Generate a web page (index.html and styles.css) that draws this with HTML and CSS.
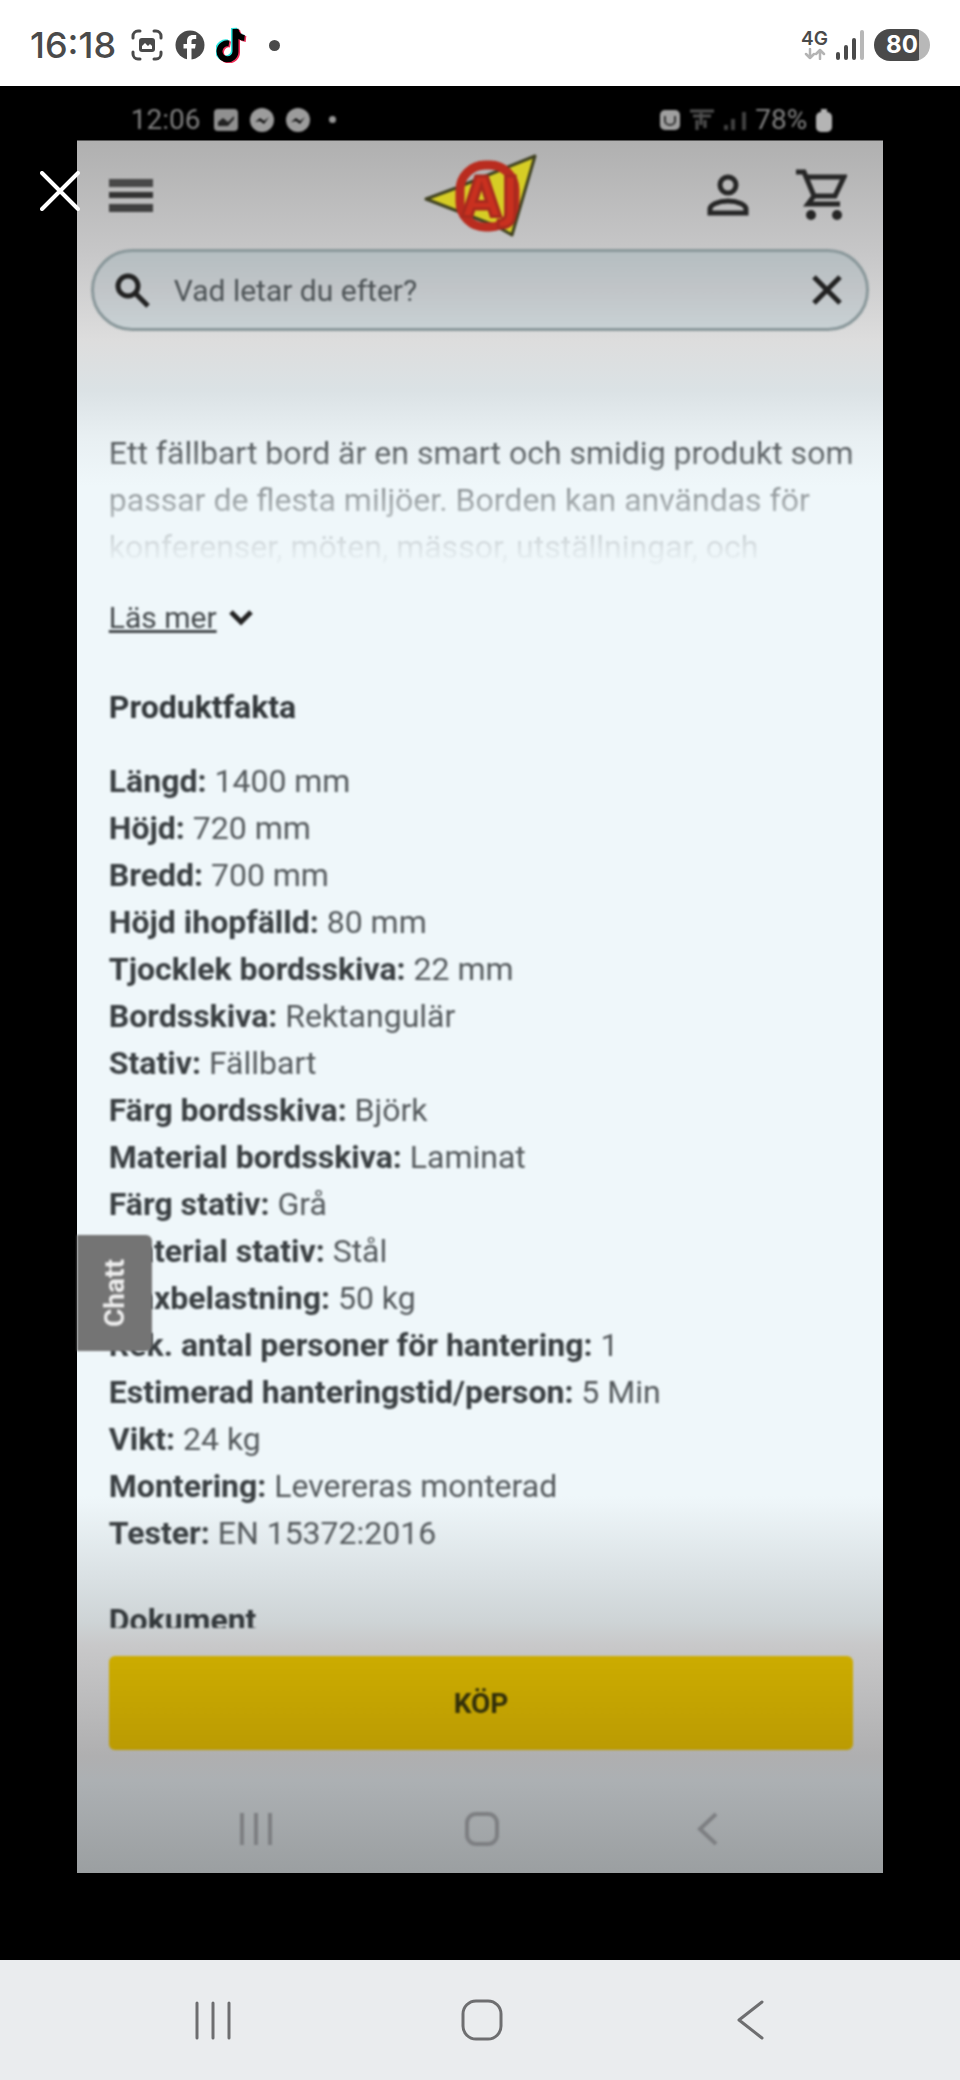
FILE: index.html
```html
<!DOCTYPE html>
<html lang="sv">
<head>
    <meta charset="UTF-8">
    <meta name="viewport" content="width=device-width, initial-scale=1.0">
    <title>Produktfakta</title>
    <link rel="stylesheet" href="styles.css">
</head>
<body>

<header class="status-bar">
    <div class="status-left">
        <span class="clock">16:18</span>
        <svg width="32" height="32" viewBox="0 0 32 32" fill="none" stroke="#4a4a4a" stroke-width="3" stroke-linecap="round">
            <path d="M2 9V7a5 5 0 0 1 5-5h2M23 2h2a5 5 0 0 1 5 5v2M30 23v2a5 5 0 0 1-5 5h-2M9 30H7a5 5 0 0 1-5-5v-2"/>
            <rect x="8" y="9" width="16" height="14" rx="3" fill="#4a4a4a" stroke="none"/>
            <path d="M11 20v-3l3-3 3 3 2-2 2 2v3z" fill="#fff" stroke="none"/>
        </svg>
        <svg class="icon-fb" width="30" height="30" viewBox="0 0 30 30">
            <circle cx="15" cy="15" r="14.500" fill="#4a4a4a"/>
            <path d="M12 30V18.500H8.500v-4.500H12v-3c0-4 2.300-6 6-6h3.200v4h-2.200c-1.700 0-2.500.8-2.500 2.300V14h4.300l-.8 4.500h-3.500V30z" fill="#fff"/>
        </svg>
        <svg class="icon-tiktok" width="32" height="36" viewBox="0 0 32 36" fill="none" stroke-width="6">
            <path d="M13 16.500a8 8 0 1 0 6.500 8V2c.5 5 4 8.500 9 9" stroke="#2ee6e0" transform="translate(-1.500 -1)"/>
            <path d="M13 16.500a8 8 0 1 0 6.500 8V2c.5 5 4 8.500 9 9" stroke="#f0305a" transform="translate(1.500 1)"/>
            <path d="M13 16.500a8 8 0 1 0 6.500 8V2c.5 5 4 8.500 9 9" stroke="#000"/>
        </svg>
        <span class="dot"></span>
    </div>
    <div class="status-right">
        <div class="network">
            <span>4G</span>
            <svg width="22" height="12" viewBox="0 0 22 12" fill="none" stroke="#b4b4b4" stroke-width="2.500" stroke-linecap="round" stroke-linejoin="round">
                <path d="M6 1v9M2 6l4 4 4-4M16 11V2M12 6l4-4 4 4"/>
            </svg>
        </div>
        <svg width="28" height="30" viewBox="0 0 28 30" stroke="#4a4a4a" stroke-width="4" stroke-linecap="round">
            <path d="M2 24v4M10 17v11M18 10v18"/>
            <path d="M26 2v26" stroke="#b8b8b8"/>
        </svg>
        <span class="battery">80</span>
    </div>
</header>

<main class="viewer">
    <button class="close" aria-label="Stäng">
        <svg width="40" height="40" viewBox="0 0 40 40" stroke="#fff" stroke-width="4" stroke-linecap="round">
            <path d="M2 2l36 36M38 2L2 38"/>
        </svg>
    </button>

    <div class="photo">
        <div class="phone-status soft">
            <div class="phone-left">
                <span>12:06</span>
                <svg width="26" height="26" viewBox="0 0 26 26">
                    <rect x="1" y="2" width="24" height="22" rx="4" fill="#909090"/>
                    <path d="M5 19v-4l5-4 5 4 6-6v3l-6 7z" fill="#222"/>
                </svg>
                <svg width="26" height="26" viewBox="0 0 26 26">
                    <circle cx="13" cy="13" r="12" fill="#9c9c9c"/>
                    <path d="M6 15l5-4 4 3 5-4-5 7-4-3z" fill="#111"/>
                </svg>
                <svg width="26" height="26" viewBox="0 0 26 26">
                    <circle cx="13" cy="13" r="12" fill="#9c9c9c"/>
                    <path d="M6 15l5-4 4 3 5-4-5 7-4-3z" fill="#111"/>
                </svg>
                <span class="phone-dot"></span>
            </div>
            <div class="phone-right">
                <svg width="22" height="24" viewBox="0 0 22 24">
                    <rect x="1" y="2" width="20" height="20" rx="5" fill="#a0a0a0"/>
                    <path d="M6 8v5a5 4 0 0 0 10 0V8" fill="none" stroke="#333" stroke-width="2"/>
                </svg>
                <svg width="26" height="26" viewBox="0 0 26 26" fill="none" stroke="#505050" stroke-width="3">
                    <path d="M1 4h24M4 9h18M8 13v10M16 13v8M12 6v12"/>
                </svg>
                <svg width="24" height="20" viewBox="0 0 24 20" stroke="#404040" stroke-width="4">
                    <path d="M3 20v-5M10 20V9M21 20V2"/>
                </svg>
                <span>78%</span>
                <svg width="18" height="24" viewBox="0 0 18 24" fill="#b4b4b4">
                    <rect x="1" y="4" width="16" height="20" rx="5"/>
                    <rect x="6" y="1" width="6" height="5"/>
                </svg>
            </div>
        </div>

        <div class="shop-header soft">
            <button class="icon-btn" aria-label="Meny">
                <svg width="44" height="34" viewBox="0 0 44 34" fill="#333">
                    <rect y="1" width="44" height="8" fill="#484848"/>
                    <rect y="14" width="44" height="6"/>
                    <rect y="26" width="44" height="8" fill="#404040"/>
                </svg>
            </button>
            <a class="logo" href="#" aria-label="AJ">
                <svg width="114" height="84" viewBox="12 9 114 84">
                    <path d="M15 55L45 44L124 12L101 91L85 82z" fill="#d6cd25" stroke="#3f4020" stroke-width="3" stroke-linejoin="round"/>
                    <rect x="49" y="21" width="55" height="62" rx="25" fill="none" stroke="#b92c1f" stroke-width="9"/>
                    <text x="51" y="72" class="logo-text">AJ</text>
                </svg>
            </a>
            <div class="shop-actions">
                <button class="icon-btn" aria-label="Mitt konto">
                    <svg width="42" height="42" viewBox="0 0 42 42" fill="none" stroke="#262626" stroke-width="5">
                        <circle cx="21" cy="11" r="8"/>
                        <path d="M3 39v-4c0-4 8-8 18-8s18 4 18 8v4z"/>
                    </svg>
                </button>
                <button class="icon-btn" aria-label="Varukorg">
                    <svg width="52" height="52" viewBox="0 0 52 52" fill="none" stroke="#262626" stroke-width="5">
                        <path d="M1 3h8l10 24h21l9-19H12M19 27l-6 8h32"/>
                        <circle cx="16" cy="46" r="5" fill="#262626" stroke="none"/>
                        <circle cx="42" cy="46" r="5" fill="#262626" stroke="none"/>
                    </svg>
                </button>
            </div>
        </div>

        <form class="search soft">
            <svg width="36" height="36" viewBox="0 0 36 36" fill="none" stroke="#222" stroke-width="5">
                <circle cx="14" cy="14" r="10"/>
                <path d="M21 21l13 13"/>
            </svg>
            <input type="text" aria-label="Sök" placeholder="Vad letar du efter?">
            <button class="icon-btn" type="reset" aria-label="Rensa">
                <svg width="30" height="30" viewBox="0 0 30 30" stroke="#222" stroke-width="5">
                    <path d="M2 2l26 26M28 2L2 28"/>
                </svg>
            </button>
        </form>

        <div class="content soft">
            <p class="description">
                Ett fällbart bord är en smart och smidig produkt som<br>
                passar de flesta miljöer. Borden kan användas för<br>
                konferenser, möten, mässor, utställningar, och
            </p>
            <a class="read-more" href="#">
                <span>Läs mer</span>
                <svg width="24" height="16" viewBox="0 0 24 16" fill="none" stroke="#222" stroke-width="5">
                    <path d="M2 2l10 10L22 2"/>
                </svg>
            </a>

            <h2>Produktfakta</h2>
            <ul class="facts">
                <li><b>Längd:</b> 1400 mm</li>
                <li><b>Höjd:</b> 720 mm</li>
                <li><b>Bredd:</b> 700 mm</li>
                <li><b>Höjd ihopfälld:</b> 80 mm</li>
                <li><b>Tjocklek bordsskiva:</b> 22 mm</li>
                <li><b>Bordsskiva:</b> Rektangulär</li>
                <li><b>Stativ:</b> Fällbart</li>
                <li><b>Färg bordsskiva:</b> Björk</li>
                <li><b>Material bordsskiva:</b> Laminat</li>
                <li><b>Färg stativ:</b> Grå</li>
                <li><b>Material stativ:</b> Stål</li>
                <li><b>Maxbelastning:</b> 50 kg</li>
                <li><b>Rek. antal personer för hantering:</b> 1</li>
                <li><b>Estimerad hanteringstid/person:</b> 5 Min</li>
                <li><b>Vikt:</b> 24 kg</li>
                <li><b>Montering:</b> Levereras monterad</li>
                <li><b>Tester:</b> EN 15372:2016</li>
            </ul>
            <h2 class="documents">Dokument</h2>
            <button class="buy">KÖP</button>
        </div>

        <nav class="phone-nav soft">
            <svg width="34" height="34" viewBox="0 0 34 34" stroke="#7d7f82" stroke-width="4">
                <path d="M3 1v32M17 1v32M31 1v32"/>
            </svg>
            <svg width="34" height="34" viewBox="0 0 34 34" fill="none" stroke="#7d7f82" stroke-width="4">
                <rect x="2" y="2" width="30" height="30" rx="9"/>
            </svg>
            <svg width="34" height="34" viewBox="0 0 34 34" fill="none" stroke="#7d7f82" stroke-width="4">
                <path d="M25 2L9 17l16 15"/>
            </svg>
        </nav>

        <button class="chat soft">Chatt</button>
    </div>
</main>

<nav class="nav-bar">
    <button class="icon-btn" aria-label="Senaste appar">
        <svg width="42" height="42" viewBox="0 0 42 42" stroke="#6e6e70" stroke-width="3" stroke-linecap="round">
            <path d="M5 4v35M21 4v35M37 4v35"/>
        </svg>
    </button>
    <button class="icon-btn" aria-label="Hem">
        <svg width="42" height="42" viewBox="0 0 42 42" fill="none" stroke="#6e6e70" stroke-width="3">
            <rect x="2" y="2" width="38" height="38" rx="13"/>
        </svg>
    </button>
    <button class="icon-btn" aria-label="Tillbaka">
        <svg width="42" height="42" viewBox="0 0 42 42" fill="none" stroke="#6e6e70" stroke-width="3" stroke-linecap="round" stroke-linejoin="round">
            <path d="M32 3L9 21l23 18"/>
        </svg>
    </button>
</nav>

</body>
</html>
```
FILE: styles.css
```css
* {
    box-sizing: border-box;
}
body {
    margin: 0;
    min-height: 100vh;
    display: flex;
    flex-direction: column;
    font-family: Roboto, Arial, sans-serif;
    background-color: #000;
}
svg {
    display: block;
    flex: none;
}
button {
    padding: 0;
    border: none;
    background: none;
    font-family: inherit;
    cursor: pointer;
}
a {
    color: inherit;
}

/* Outer status bar */
.status-bar {
    display: flex;
    justify-content: space-between;
    align-items: center;
    height: 86px;
    padding: 4px 30px 0 30px;
    background-color: #fff;
    color: #4a4a4a;
}
.status-left,
.status-right {
    display: flex;
    align-items: center;
}
.clock {
    width: 101px;
    font-family: Inter, Roboto, sans-serif;
    font-size: 36px;
    font-weight: 500;
}
.icon-fb {
    margin-left: 12px;
}
.icon-tiktok {
    margin-left: 11px;
}
.dot {
    width: 11px;
    height: 11px;
    margin-left: 21px;
    border-radius: 50%;
    background-color: #4a4a4a;
}
.status-right {
    gap: 8px;
}
.network {
    display: flex;
    flex-direction: column;
    align-items: center;
    font-family: Inter, Roboto, sans-serif;
    font-size: 19px;
    line-height: 18px;
    font-weight: 600;
}
.battery {
    width: 56px;
    height: 32px;
    margin-left: 2px;
    border-radius: 16px;
    background: linear-gradient(to right, #4a4a4a 80%, #b8b8b8 80%);
    color: #fff;
    font-family: Inter, Roboto, sans-serif;
    font-size: 24px;
    line-height: 32px;
    font-weight: 700;
    text-align: center;
}

/* Image viewer */
.viewer {
    position: relative;
    flex: 1;
    padding: 0 8% 87px;
}
.close {
    position: absolute;
    top: 85px;
    left: 40px;
    z-index: 2;
}
.photo {
    position: relative;
    background: linear-gradient(to bottom,
        #000 54px, #b0b0b0 55px, #c6c6c7 164px, #dddddd 255px, #dbe2e5 305px,
        #e8eff2 350px, #eff7fa 400px, #eff7fa 1410px, #dae1e4 1490px,
        #ced4d6 1535px, #c8c8c9 1560px, #afafb0 1670px, #acb0b3 1695px, #9b9fa1 1787px);
    color: #44494c;
}
.soft {
    filter: blur(1px);
}
.phone-status {
    display: flex;
    justify-content: space-between;
    align-items: center;
    height: 55px;
    padding: 12px 50px 0 54px;
    color: #808080;
    font-size: 28px;
}
.phone-left {
    display: flex;
    align-items: center;
    gap: 10px;
}
.phone-left span:first-child {
    width: 72px;
}
.phone-right {
    display: flex;
    align-items: center;
    gap: 8px;
}
.phone-dot {
    width: 7px;
    height: 7px;
    margin-left: 8px;
    border-radius: 50%;
    background-color: #999;
}

/* Shop header */
.shop-header {
    display: grid;
    grid-template-columns: 1fr auto 1fr;
    align-items: center;
    height: 108px;
    padding: 0 32px;
}
.shop-header .icon-btn {
    justify-self: start;
}
.logo-text {
    font-family: "DejaVu Sans Condensed", "DejaVu Sans", sans-serif;
    font-size: 56px;
    font-weight: 700;
    fill: #c9301f;
    stroke: #a82a1e;
    stroke-width: 3px;
}
.shop-actions {
    display: flex;
    justify-content: flex-end;
    align-items: center;
    gap: 46px;
    padding-right: 4px;
}
.search {
    display: flex;
    align-items: center;
    height: 82px;
    margin: 0 14px;
    padding: 0 24px 0 20px;
    border: 3px solid #89979a;
    border-radius: 41px;
    background: linear-gradient(to bottom, #b5bec1, #c1c5c8 50%, #c8d1d4);
}
.search input {
    flex: 1;
    min-width: 0;
    margin-left: 24px;
    padding: 0;
    border: none;
    outline: none;
    background: none;
    font-family: inherit;
    font-size: 30px;
    color: #4c5255;
}
.search input::placeholder {
    color: #4c5255;
    opacity: 1;
}

/* Product text */
.content {
    padding: 99px 30px 28px 32px;
    font-size: 32px;
    line-height: 47px;
}
.description {
    margin: 0 -20px 0 0;
    white-space: nowrap;
    color: #33383b;
    -webkit-mask-image: linear-gradient(to bottom, rgba(0, 0, 0, 0.9), rgba(0, 0, 0, 0.05) 90%);
    mask-image: linear-gradient(to bottom, rgba(0, 0, 0, 0.9), rgba(0, 0, 0, 0.05) 90%);
}
.read-more {
    display: flex;
    align-items: center;
    gap: 12px;
    margin-top: 23px;
    font-size: 30px;
    text-decoration: none;
}
.read-more span {
    text-decoration: underline;
}
h2 {
    margin: 43px 0 27px;
    font-size: 32px;
    line-height: 47px;
    font-weight: 700;
    color: #33383b;
}
.facts {
    margin: 0;
    padding: 0;
    list-style: none;
    color: #54595c;
}
.facts b {
    font-weight: 700;
    color: #3a3f42;
}
/* only the top of this heading shows above the buy button */
.documents {
    height: 31px;
    margin: 40px 0 28px;
    overflow: hidden;
}
.buy {
    display: block;
    width: 100%;
    height: 94px;
    border-radius: 6px;
    background: linear-gradient(to bottom, #ccac00, #bb9b03);
    color: #33300a;
    font-size: 28px;
    font-weight: 700;
}
.phone-nav {
    display: flex;
    justify-content: space-between;
    align-items: center;
    height: 95px;
    padding: 6px 158px 0 162px;
}
.chat {
    position: absolute;
    top: 1149px;
    left: 0;
    width: 75px;
    height: 116px;
    border-radius: 6px 0 0 6px;
    background-color: #747474;
    color: #eee;
    font-size: 28px;
    font-weight: 700;
    writing-mode: vertical-rl;
    transform: rotate(180deg);
}

/* Outer navigation */
.nav-bar {
    display: flex;
    justify-content: space-between;
    align-items: center;
    height: 120px;
    padding: 0 188px 0 192px;
    background-color: #eaecee;
}
```
